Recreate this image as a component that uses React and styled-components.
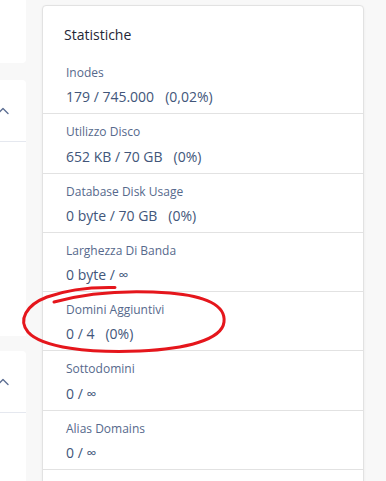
import React from 'react';
import styled, { createGlobalStyle } from 'styled-components';
import { ChevronUp } from 'lucide-react';

const GlobalStyle = createGlobalStyle`
  html, body {
    margin: 0;
    padding: 0;
    background: #f8f8f8;
    font-family: "Open Sans", "Liberation Sans", sans-serif;
  }
`

const Page = styled.div`
  position: relative;
  display: flex;
  gap: 16px;
  height: 481px;
  overflow: hidden;
`

const SideColumn = styled.div`
  flex: 0 0 260px;
  margin-left: -234px;
  display: flex;
  flex-direction: column;
`

const SidePanel = styled.div`
  background: #fff;
  border-radius: ${({ top }) => (top ? '0 0 4px 0' : '0 4px 0 0')};
  height: ${({ h }) => h}px;
  margin-top: ${({ gap }) => gap || 0}px;
  flex-shrink: 0;
`

const PanelHeader = styled.div`
  display: flex;
  justify-content: flex-end;
  align-items: center;
  height: 61px;
  padding-right: 13px;
  border-bottom: 1px solid #e5e8ef;
  color: #5b6d92;
`

const Card = styled.div`
  flex: 0 0 322px;
  box-sizing: border-box;
  margin-top: 5px;
  align-self: flex-start;
  background: #fff;
  border: 1px solid #e2e2e2;
  border-radius: 4px;
  box-shadow: 0 1px 3px rgba(0, 0, 0, 0.06);
`

const Title = styled.div`
  padding: 19px 21px 10px;
  font-size: 14px;
  line-height: 20px;
  color: #1f2636;
`

const Row = styled.div`
  padding: 9px 23px 7px;
  border-bottom: 1px solid #e2e2e2;
`

const Label = styled.div`
  font-size: 12px;
  line-height: 18.25px;
  color: #56698c;
`

const Value = styled.div`
  margin-top: 6px;
  font-size: 14px;
  line-height: 18px;
  color: #42567a;
`

const Percent = styled.span`
  margin-left: 11px;
`

const Scribble = styled.svg`
  position: absolute;
  left: 0;
  top: 0;
  pointer-events: none;
`

const stats = [
  { label: 'Inodes', value: '179 / 745.000', pct: '(0,02%)' },
  { label: 'Utilizzo Disco', value: '652 KB / 70 GB', pct: '(0%)' },
  { label: 'Database Disk Usage', value: '0 byte / 70 GB', pct: '(0%)' },
  { label: 'Larghezza Di Banda', value: '0 byte / ∞' },
  { label: 'Domini Aggiuntivi', value: '0 / 4', pct: '(0%)' },
  { label: 'Sottodomini', value: '0 / ∞' },
  { label: 'Alias Domains', value: '0 / ∞' },
  { label: 'Account E-mail', value: '0 / ∞' },
];

const App = () => (
  <>
    <GlobalStyle />
    <Page>
      <SideColumn>
        <SidePanel top h={63} />
        <SidePanel gap={17} h={256}>
          <PanelHeader>
            <ChevronUp size={20} strokeWidth={1.6} />
          </PanelHeader>
        </SidePanel>
        <SidePanel gap={15} h={200}>
          <PanelHeader>
            <ChevronUp size={20} strokeWidth={1.6} />
          </PanelHeader>
        </SidePanel>
      </SideColumn>
      <Card>
        <Title>Statistiche</Title>
        {stats.map((s) => (
          <Row key={s.label}>
            <Label>{s.label}</Label>
            <Value>
              {s.value}
              {s.pct && <Percent>{s.pct}</Percent>}
            </Value>
          </Row>
        ))}
      </Card>
      <Scribble width="386" height="481" viewBox="0 0 386 481">
        <path
          d="M115 287.5 C92 287, 66 290, 47 297 C26 305, 18 320, 28 332 C42 348, 90 353, 140 351 C185 349, 222 340, 224 322 C226 305, 205 296, 170 293 C130 290, 90 292, 54 302"
          fill="none"
          stroke="#e5161c"
          strokeWidth="3"
          strokeLinecap="round"
          strokeLinejoin="round"
        />
      </Scribble>
    </Page>
  </>
);

export default App;
